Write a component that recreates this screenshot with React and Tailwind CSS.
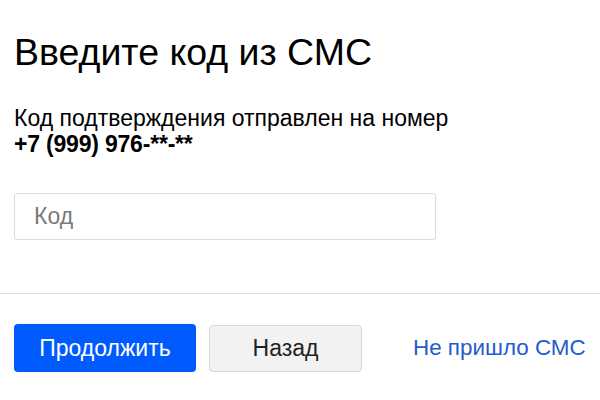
export default function App() {
  return (
    <div className="w-[600px] h-[400px] bg-white overflow-hidden font-['Liberation_Sans',Arial,sans-serif] text-black">
      <div className="px-[14px] pt-[30px]">
        <h1 className="text-[37.5px] leading-[44px] font-normal">Введите код из СМС</h1>
        <p className="mt-[31px] text-[23px] leading-[26px]">
          Код подтверждения отправлен на номер
          <br />
          <b className="font-bold tracking-[-0.2px]">+7 (999) 976-**-**</b>
        </p>
        <input
          type="text"
          placeholder="Код"
          className="mt-[36px] w-[422px] h-[47px] border border-[#dcdcdc] rounded-[3px] px-[19px] text-[23px] outline-none placeholder:text-[#7a7a7a]"
        />
      </div>
      <div className="mt-[53px] border-t border-[#e0e0e0]" />
      <div className="flex items-center px-[14px] pt-[30px]">
        <button className="w-[182px] h-[48px] rounded-[4px] bg-[#005bff] text-white text-[23px]">
          Продолжить
        </button>
        <button className="ml-[13px] w-[153px] h-[47px] rounded-[4px] bg-[#f2f2f2] border border-[#d9d9d9] text-[#222] text-[23px]">
          Назад
        </button>
        <a href="#" className="ml-[51px] text-[22.4px] text-[#1f5ccc] whitespace-nowrap">
          Не пришло СМС
        </a>
      </div>
    </div>
  );
}
